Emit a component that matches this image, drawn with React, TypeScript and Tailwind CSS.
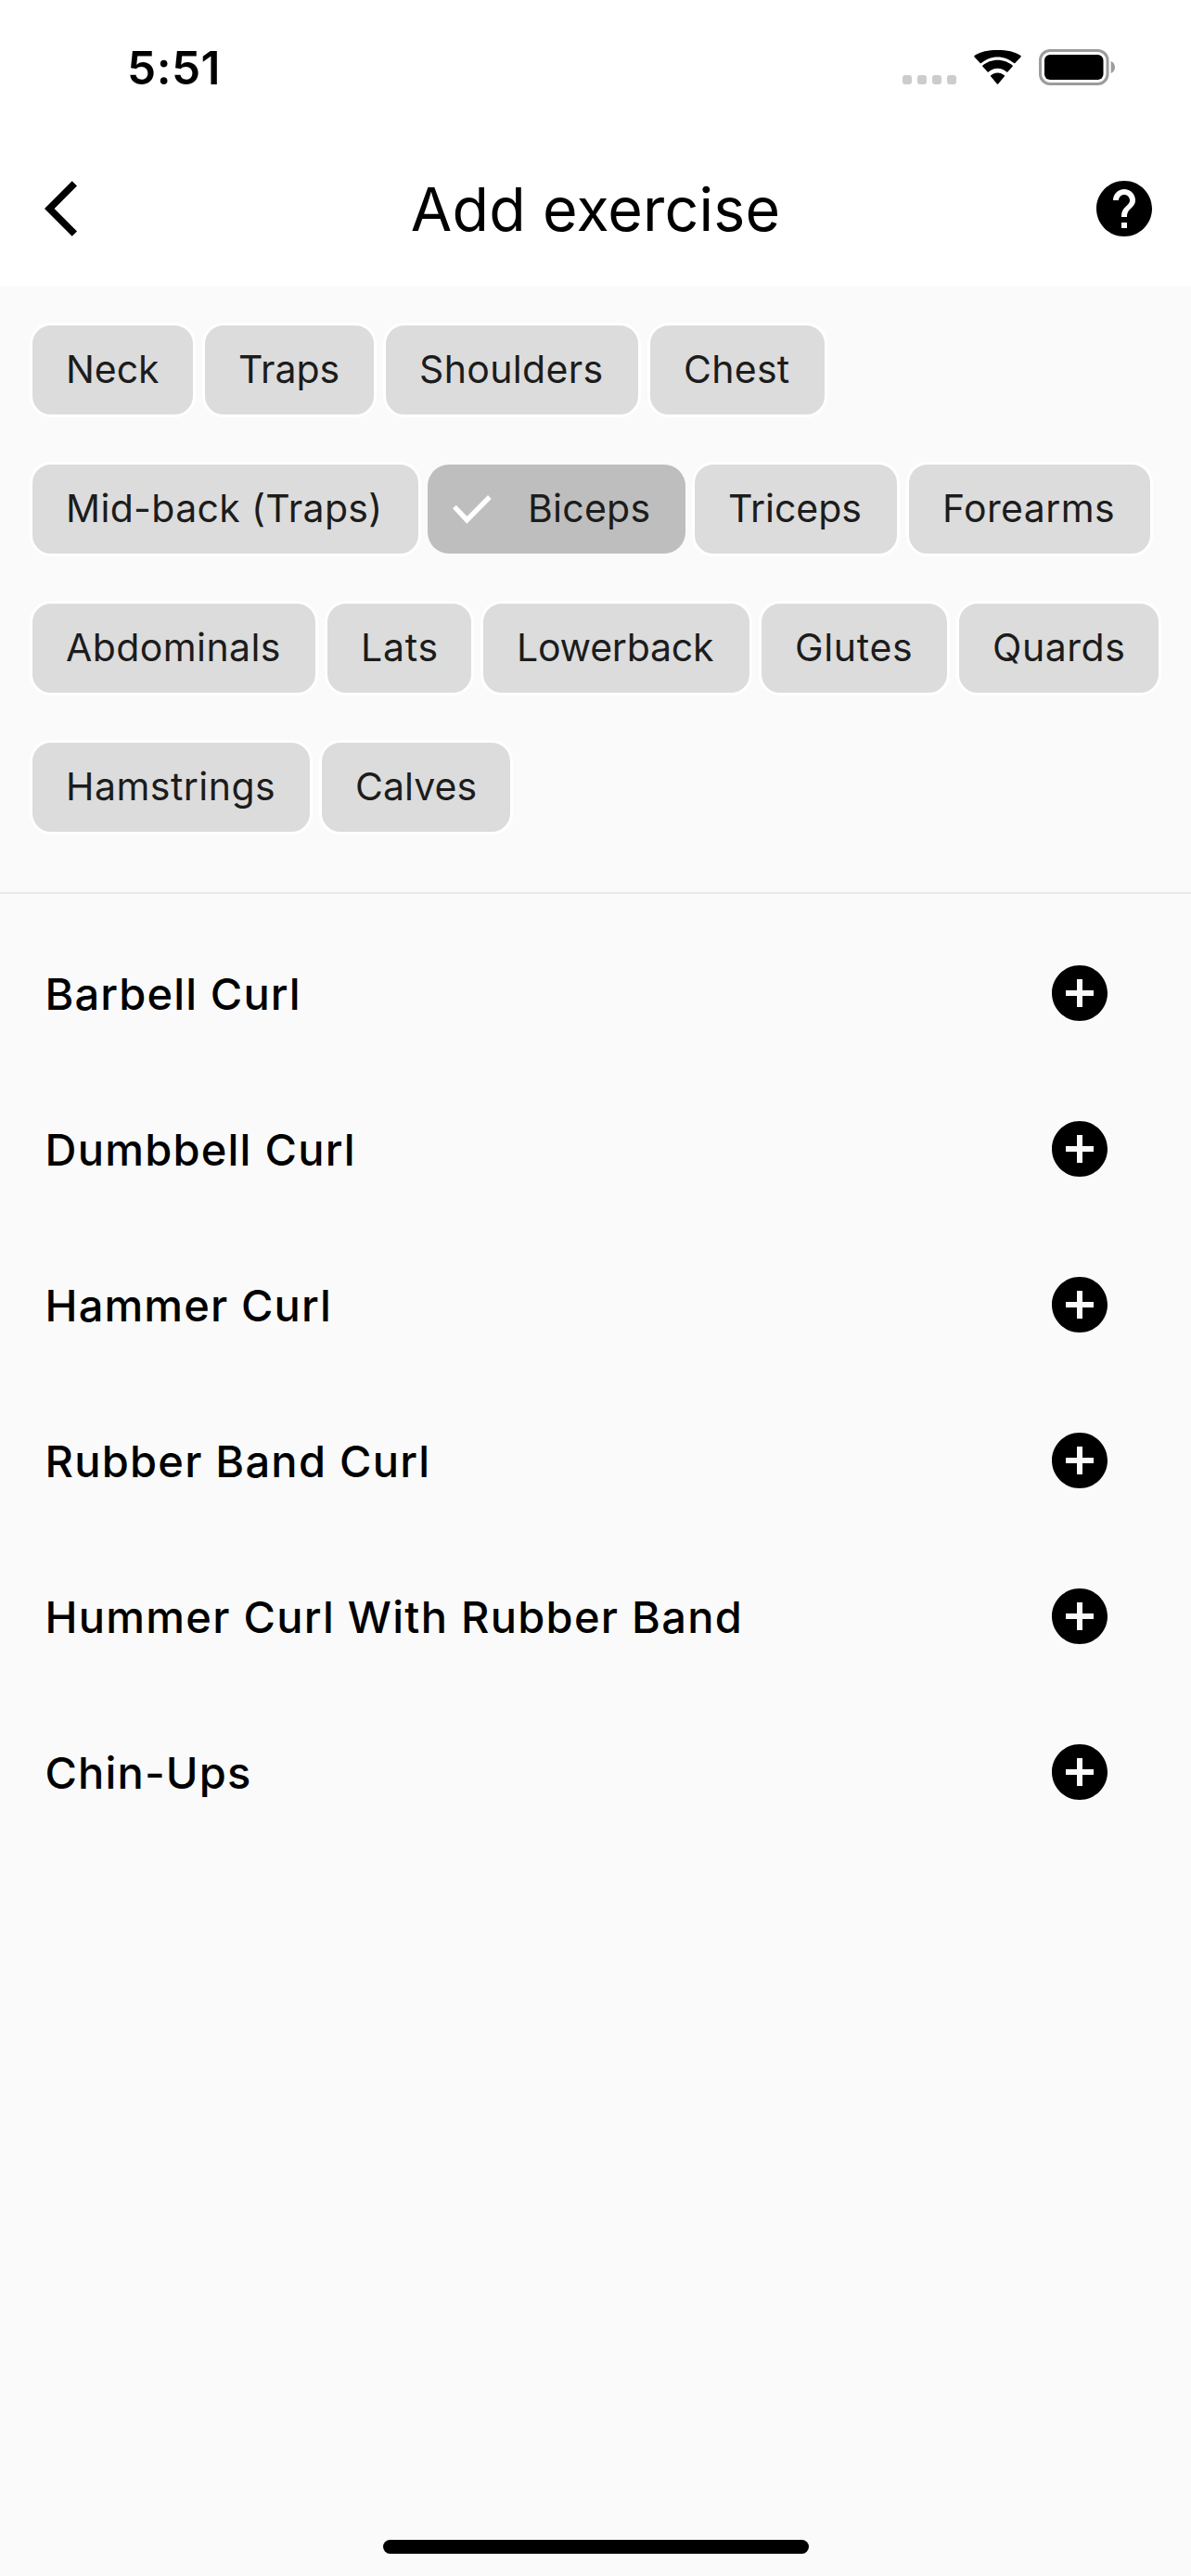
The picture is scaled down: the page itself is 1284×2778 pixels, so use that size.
import { MdAddCircle, MdArrowBackIos, MdHelp } from "react-icons/md";

type Chip = { label: string; box: string; text: string; selected?: boolean };

const chipRows: Chip[][] = [
  [
    { label: "Neck", box: "w-[179px]", text: "tracking-[-0.07px]" },
    { label: "Traps", box: "w-[188px]", text: "tracking-[-0.05px]" },
    { label: "Shoulders", box: "w-[278px]", text: "tracking-[0.34px]" },
    { label: "Chest", box: "w-[194px]", text: "tracking-[0.27px]" },
  ],
  [
    { label: "Mid-back (Traps)", box: "w-[422px]", text: "tracking-[0.34px]" },
    { label: "Biceps", box: "w-[278px]", text: "tracking-[0.26px]", selected: true },
    { label: "Triceps", box: "w-[224px]", text: "tracking-[-0.05px]" },
    { label: "Forearms", box: "w-[266px]", text: "tracking-[0.39px]" },
  ],
  [
    { label: "Abdominals", box: "w-[311px]", text: "tracking-[0.41px]" },
    { label: "Lats", box: "w-[161px]", text: "tracking-[0.75px]" },
    { label: "Lowerback", box: "w-[293px]", text: "tracking-[-0.22px]" },
    { label: "Glutes", box: "w-[206px]", text: "tracking-[0.66px]" },
    { label: "Quards", box: "w-[221px]", text: "tracking-[0.56px]" },
  ],
  [
    { label: "Hamstrings", box: "w-[305px]", text: "tracking-[0.47px]" },
    { label: "Calves", box: "w-[209px]", text: "tracking-[0.07px]" },
  ],
];

const exercises = [
  { name: "Barbell Curl", tracking: "tracking-[1.12px]" },
  { name: "Dumbbell Curl", tracking: "tracking-[1.23px]" },
  { name: "Hammer Curl", tracking: "tracking-[1.13px]" },
  { name: "Rubber Band Curl", tracking: "tracking-[1.24px]" },
  { name: "Hummer Curl With Rubber Band", tracking: "tracking-[1.27px]" },
  { name: "Chin-Ups", tracking: "tracking-[1.15px]" },
];

function WifiIcon() {
  return (
    <svg className="ml-[19px] h-[38px] w-[51px]" viewBox="0 0 51 38" fill="#000">
      <path d="M25.5 8.4c6.8 0 13 2.5 17.600 6.700.4.300.9.300 1.200 0l6.200-6.700c.4-.400.4-.900 0-1.300C44.100 2.500 35.300 1 25.500 1S7 2.500.5 7.100c-.4.400-.4.900 0 1.300l6.200 6.700c.3.300.8.300 1.200 0 4.600-4.200 10.800-6.700 17.600-6.700z" />
      <path d="M25.500 20.700c3.700 0 7.100 1.400 9.700 3.700.4.300.9.300 1.200 0l5.200-5.600c.4-.4.400-.9 0-1.200-4.200-3.700-9.900-5.900-16.100-5.900s-11.900 2.200-16.100 5.900c-.4.300-.4.800 0 1.200l5.200 5.600c.3.300.8.300 1.200 0 2.600-2.300 6-3.700 9.700-3.700z" />
      <path d="M32.800 29.500c.4-.4.400-.9 0-1.200-1.900-1.800-4.500-2.900-7.300-2.900s-5.400 1.100-7.300 2.900c-.4.300-.4.800 0 1.200l6.700 7.900c.3.400.9.400 1.200 0z" />
    </svg>
  );
}

function BatteryIcon() {
  return (
    <svg className="ml-[19px] h-[40px] w-[83px]" viewBox="0 0 83 40">
      <rect x="1.500" y="1.500" width="72.500" height="36" rx="10.500" fill="none" stroke="#9c9c9c" strokeWidth="3" />
      <rect x="6" y="6" width="63.500" height="27" rx="6" fill="#000" />
      <path d="M77.700 13v13c2.600-1.100 4.300-3.700 4.300-6.500s-1.700-5.400-4.300-6.500z" fill="#9c9c9c" />
    </svg>
  );
}

function StatusBar() {
  return (
    <div className="flex h-[141px] items-start justify-between pl-[137px] pr-[81px]">
      <span className="mt-[43px] text-[49.5px] font-semibold leading-[60px] tracking-[0.5px]">5:51</span>
      <div className="mt-[53px] flex items-start">
        <div className="mt-[28px] flex gap-[6px]">
          {[0, 1, 2, 3].map((i) => (
            <span key={i} className="size-[10px] rounded-[3px] bg-[#cccccc]" />
          ))}
        </div>
        <WifiIcon />
        <BatteryIcon />
      </div>
    </div>
  );
}

function FilterChip({ label, box, text, selected }: Chip) {
  if (selected) {
    return (
      <button className={`my-[3px] flex h-[96px] items-center rounded-[23px] bg-[#bebebe] pl-[27px] ${box}`}>
        <svg className="h-[31px] w-[42px] shrink-0" viewBox="0 0 42 31" fill="#fff">
          <path d="M0 14.300 3.700 10.700 15.500 22.700 38 0 41.700 4 15.300 30.700z" />
        </svg>
        <span className={`ml-[39px] whitespace-nowrap pb-[2px] ${text}`}>{label}</span>
      </button>
    );
  }
  return (
    <button
      className={`flex h-[102px] items-center rounded-[23px] border-[3px] border-white bg-[#dcdcdc] pl-[36px] ${box}`}
    >
      <span className={`whitespace-nowrap pb-[2px] ${text}`}>{label}</span>
    </button>
  );
}

export default function App() {
  return (
    <div className="flex h-[2778px] w-[1284px] flex-col overflow-hidden bg-[#fafafa] font-['Inter',sans-serif] text-black">
      <header className="h-[309px] bg-white">
        <StatusBar />
        <div className="flex h-[168px] items-center justify-between pl-[48px] pr-[36px]">
          <MdArrowBackIos className="size-[72px]" />
          <h1 className="-ml-[12px] whitespace-nowrap pt-[2px] text-[64.5px] font-[370] leading-[80px] tracking-[0.15px]">
            Add exercise
          </h1>
          <MdHelp className="size-[72px]" />
        </div>
      </header>

      <section className="flex flex-col gap-[48px] border-b-2 border-[#e9e9e9] pt-[39px] pb-[62px] pl-[32px] text-[41px] leading-[50px] text-[#1c1c1c]">
        {chipRows.map((row, i) => (
          <div key={i} className="flex gap-[7px]">
            {row.map((chip) => (
              <FilterChip key={chip.label} {...chip} />
            ))}
          </div>
        ))}
      </section>

      <ul className="mt-[23px] flex-1">
        {exercises.map((exercise) => (
          <li key={exercise.name} className="flex h-[168px] items-center justify-between pl-[48.5px] pr-[84px]">
            <span className={`pt-[2px] text-[47px] font-medium leading-[58px] ${exercise.tracking}`}>
              {exercise.name}
            </span>
            <MdAddCircle className="size-[72px]" />
          </li>
        ))}
      </ul>

      <div className="mx-auto mb-[24px] h-[15px] w-[459px] rounded-full bg-black" />
    </div>
  );
}
